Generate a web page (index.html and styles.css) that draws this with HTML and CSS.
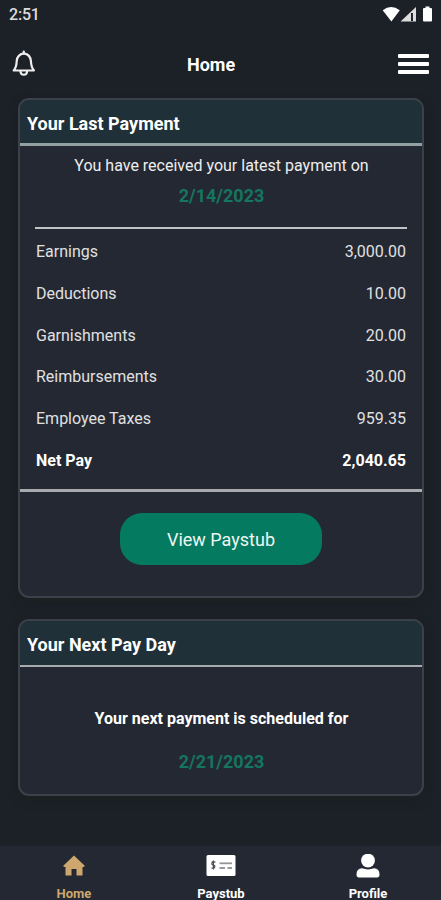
FILE: index.html
```html
<!DOCTYPE html>
<html lang="en">

<head>
  <meta charset="UTF-8">
  <meta name="viewport" content="width=device-width, initial-scale=1">
  <title>Home</title>
  <link rel="stylesheet" href="styles.css">
</head>

<body>
  <div class="status">
    <span class="time">2:51</span>
    <svg class="status-icons" width="52" height="18" viewBox="0 0 52 18">
      <path d="M0.7 4.2 Q9 -2.2 17.8 4.2 L9.4 15.6Z" fill="#fff" />
      <path d="M18.5 15.5 L34 1 V15.5Z" fill="#ddd" />
      <path d="M30 7V15" stroke="#1c2027" stroke-width="2" />
      <path d="M31.5 7.5V12" stroke="#ddd" stroke-width="1.2" />
      <path d="M43.500 0.500h4v1.500h1.500q1 0 1 1v11.500q0 1-1 1h-7q-1 0-1-1v-11.500q0-1 1-1h1.500z" fill="#fff" />
    </svg>
  </div>

  <div class="topbar">
    <svg class="bell" width="24" height="28" viewBox="0 0 24 28">
      <path d="M1.700 20.500 C4.500 17.500 4.500 15 4.700 11 C5 6.500 8 4 11.800 3.300 C15.600 4 18.600 6.500 18.900 11 C19.100 15 19.300 17.500 21.900 20.500 Z" />
      <path d="M11.800 1.500V3.500M8.500 21.500C8.700 25.800 14.900 25.800 15.100 21.500" />
    </svg>
    <h1>Home</h1>
    <div class="menu">
      <i></i>
      <i></i>
      <i></i>
    </div>
  </div>

  <div class="card last">
    <h2>Your Last Payment</h2>
    <div class="summary">
      <p class="note">You have received your latest payment on</p>
      <p class="date">2/14/2023</p>
      <div class="rows">
        <div class="row"><span>Earnings</span><span>3,000.00</span></div>
        <div class="row"><span>Deductions</span><span>10.00</span></div>
        <div class="row"><span>Garnishments</span><span>20.00</span></div>
        <div class="row"><span>Reimbursements</span><span>30.00</span></div>
        <div class="row"><span>Employee Taxes</span><span>959.35</span></div>
        <div class="row net"><span>Net Pay</span><span>2,040.65</span></div>
      </div>
    </div>
    <div class="action">
      <button class="btn">View Paystub</button>
    </div>
  </div>

  <div class="card next">
    <h2>Your Next Pay Day</h2>
    <p class="note">Your next payment is scheduled for</p>
    <p class="date">2/21/2023</p>
  </div>

  <div class="tabs">
    <div class="tab active">
      <svg width="32" height="26" viewBox="0 0 32 26">
        <path d="M16 1.500 L27 12 L25.500 13 H24.500 V21.500 H18.500 V15 H13.500 V21.500 H7.500 V13 H6.500 L5 12Z" fill="#cda76e" />
      </svg>
      <span>Home</span>
    </div>
    <div class="tab">
      <svg width="32" height="26" viewBox="0 0 32 26">
        <rect x="1.500" y="1" width="29" height="21" rx="1.500" fill="#fff" />
        <path d="M10.500 8.200Q7.200 6.800 6.900 9T8.500 11.200T9.600 13.300T6.500 13.800M8.400 6.500V15.500" fill="none" stroke="#4a4d52" stroke-width="1.200" />
        <path d="M14.500 9.300H27" stroke="#92959a" stroke-width="1.800" />
        <path d="M14.500 14H20M22.500 14H27" stroke="#777a80" stroke-width="1.500" />
      </svg>
      <span>Paystub</span>
    </div>
    <div class="tab">
      <svg width="32" height="26" viewBox="0 0 32 26">
        <circle cx="16" cy="6.500" r="6.900" fill="#fff" />
        <path d="M4.500 20.500Q4.500 14.500 10 14.300Q16 16.500 22 14.300Q27.500 14.500 27.500 20.500Q27.500 23.500 25 23.500H7Q4.500 23.500 4.500 20.500Z" fill="#fff" />
      </svg>
      <span>Profile</span>
    </div>
  </div>
</body>

</html>
```
FILE: styles.css
```css
* {
  box-sizing: border-box;
}

body {
  margin: 0;
  height: 900px;
  overflow: hidden;
  display: flex;
  flex-direction: column;
  background: #1c2027;
  color: #fff;
  font-family: Roboto, sans-serif;
}

h1,
h2,
p {
  margin: 0;
}

.status {
  height: 34px;
  padding: 6px 7px 0 9px;
  display: flex;
  justify-content: space-between;
}

.time {
  font-size: 16px;
  line-height: 18px;
  font-weight: 500;
  letter-spacing: -0.2px;
  color: #dcdcdc;
}

.topbar {
  height: 64px;
  padding: 0 12px 5px;
  display: flex;
  align-items: center;
}

.topbar h1 {
  margin-left: 151px;
  padding-top: 2px;
  font-size: 18px;
  line-height: 24px;
}

.bell {
  fill: none;
  stroke: #eee;
  stroke-width: 2.2;
  stroke-linecap: round;
  stroke-linejoin: round;
}

.menu {
  margin-left: auto;
  width: 31px;
  display: flex;
  flex-direction: column;
  gap: 4px;
}

.menu i {
  height: 4px;
  border-radius: 1px;
  background: #fff;
}

.card {
  flex: none;
  margin: 0 17px 0 18px;
  border: 2px solid #3b4149;
  border-radius: 11px;
  background: #242832;
  overflow: hidden;
  box-shadow: 0 4px 10px rgba(28, 32, 32, 0.8);
}

.card h2 {
  height: 46px;
  padding-left: 7px;
  background: #203038;
  border-bottom: 3px solid #93a0a1;
  font-size: 18px;
  line-height: 47px;
}

.card p {
  text-align: center;
}

.note {
  padding-left: 1px;
  font-size: 16px;
  line-height: 20px;
  color: #eee;
}

.date {
  padding-left: 1px;
  font-size: 18px;
  line-height: 22px;
  font-weight: 700;
  color: #147560;
}

.last {
  height: 500px;
}

.summary {
  height: 346px;
  padding: 10px 15px 0;
  border-bottom: 3px solid #a8aaae;
}

.summary .date {
  margin-top: 9px;
}

.rows {
  margin-top: 20px;
  border-top: 2px solid #c0c3c5;
  padding-top: 2px;
}

.row {
  display: flex;
  justify-content: space-between;
  padding: 0 1px;
  font-size: 16px;
  line-height: 41.8px;
  color: #e0e0e1;
}

.net {
  color: #fff;
  font-weight: 700;
}

.action {
  padding-top: 21px;
  text-align: center;
}

.btn {
  width: 202px;
  height: 52px;
  padding: 0;
  border: 0;
  border-radius: 22px;
  background: #047b60;
  color: #eef6f3;
  font: 18px Roboto, sans-serif;
}

.next {
  height: 177px;
  margin-top: 21px;
}

.next h2 {
  border-bottom: 2px solid #a8aaae;
}

.next .note {
  margin-top: 42px;
  font-weight: 700;
  color: #fff;
}

.next .date {
  margin-top: 22px;
}

.tabs {
  height: 54px;
  margin-top: auto;
  flex: none;
  display: grid;
  grid-template-columns: repeat(3, 147px);
  background: #242832;
  overflow: hidden;
}

.tab {
  display: flex;
  flex-direction: column;
  align-items: center;
  padding: 8px 0 0 1px;
  font-size: 13px;
  line-height: 16px;
  font-weight: 700;
}

.tab svg {
  flex: none;
  margin-bottom: 6px;
}

.active {
  color: #cda76e;
}
```
